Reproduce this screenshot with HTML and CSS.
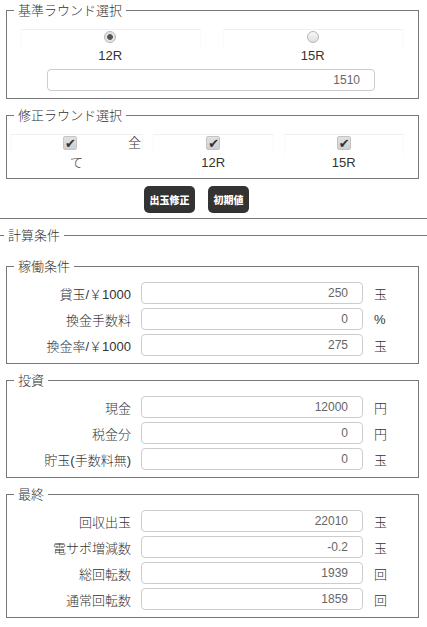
FILE: index.html
```html
<!DOCTYPE html>
<html lang="ja">
<head>
  <meta charset="UTF-8" />
  <meta name="viewport" content="width=device-width,initial-scale=1" />
  <title>出玉計算</title>
  <link rel="stylesheet" href="styles.css">
</head>
<body>
  <div class="top">
    <fieldset class="box">
      <legend>基準ラウンド選択</legend>
      <div class="opts two">
        <label class="opt">
          <span class="opt-box"><input type="radio" name="base" checked></span>
          <span class="opt-text">12R</span>
        </label>
        <label class="opt">
          <span class="opt-box"><input type="radio" name="base"></span>
          <span class="opt-text">15R</span>
        </label>
      </div>
      <input class="field base-field" type="text" value="1510">
    </fieldset>

    <fieldset class="box">
      <legend>修正ラウンド選択</legend>
      <div class="opts three">
        <label class="opt all">
          <span class="opt-box"><input type="checkbox" checked><span>全</span></span>
          <span class="opt-text">て</span>
        </label>
        <label class="opt">
          <span class="opt-box"><input type="checkbox" checked></span>
          <span class="opt-text">12R</span>
        </label>
        <label class="opt">
          <span class="opt-box"><input type="checkbox" checked></span>
          <span class="opt-text">15R</span>
        </label>
      </div>
    </fieldset>

    <div class="actions">
      <button class="btn">出玉修正</button>
      <button class="btn">初期値</button>
    </div>
  </div>

  <hr class="sep">

  <fieldset class="calc">
    <legend>計算条件</legend>
    <div class="calc-body">
      <fieldset class="box">
        <legend>稼働条件</legend>
        <div class="rows">
          <div class="row"><span class="lbl">貸玉/￥1000</span><input class="field" type="text" value="250"><span class="unit">玉</span></div>
          <div class="row"><span class="lbl">換金手数料</span><input class="field" type="text" value="0"><span class="unit">%</span></div>
          <div class="row"><span class="lbl">換金率/￥1000</span><input class="field" type="text" value="275"><span class="unit">玉</span></div>
        </div>
      </fieldset>

      <fieldset class="box">
        <legend>投資</legend>
        <div class="rows">
          <div class="row"><span class="lbl">現金</span><input class="field" type="text" value="12000"><span class="unit">円</span></div>
          <div class="row"><span class="lbl">税金分</span><input class="field" type="text" value="0"><span class="unit">円</span></div>
          <div class="row"><span class="lbl">貯玉(手数料無)</span><input class="field" type="text" value="0"><span class="unit">玉</span></div>
        </div>
      </fieldset>

      <fieldset class="box">
        <legend>最終</legend>
        <div class="rows">
          <div class="row"><span class="lbl">回収出玉</span><input class="field" type="text" value="22010"><span class="unit">玉</span></div>
          <div class="row"><span class="lbl">電サポ増減数</span><input class="field" type="text" value="-0.2"><span class="unit">玉</span></div>
          <div class="row"><span class="lbl">総回転数</span><input class="field" type="text" value="1939"><span class="unit">回</span></div>
          <div class="row"><span class="lbl">通常回転数</span><input class="field" type="text" value="1859"><span class="unit">回</span></div>
        </div>
      </fieldset>
    </div>
  </fieldset>
</body>
</html>
```

FILE: styles.css
```css
/* 共通 */
body { margin: 0; padding: 0; background: #fff; color: #333; font-family: "Liberation Sans", "Noto Sans CJK JP", sans-serif; font-size: 13px; font-weight: 300; }
.top { padding: 2px 8px 0 6px; }
fieldset { margin: 0; padding: 0; min-width: 0; }
legend { font-size: 13px; line-height: 17px; color: #333; }

/* 枠 */
.box { border: 1px solid #777; padding: 0 0 7px; }
.box + .box { margin-top: 8px; }
.box legend { margin-left: 7px; padding: 0 4px; }

/* ラジオ・チェック */
.opts { display: grid; padding-top: 10px; }
.opts.two   { grid-template-columns: 1fr 1fr; column-gap: 22px; padding-left: 13px; padding-right: 15px; }
.opts.three { grid-template-columns: 133px 1fr 1fr; column-gap: 10px; padding-left: 3px; padding-right: 14px; }
.opt { display: flex; flex-direction: column; align-items: center; }
.opt-box { align-self: stretch; display: flex; justify-content: center; border-top: 1px solid #f0f0f0; border-left: 1px solid #fafafa; border-right: 1px solid #fafafa; padding: 1px 0 5px; }
.opt-text { line-height: 16px; }
.opt.all .opt-box { justify-content: space-between; padding-left: 52px; }
.opt.all .opt-box span { line-height: 14px; margin-right: 1px; }

input[type=radio] { appearance: none; margin: 0; width: 12px; height: 12px; border: 1px solid #b5b5b5; border-radius: 50%; background: linear-gradient(#f8f8f8, #dedede); }
input[type=radio]:checked { background: radial-gradient(circle, #555 0 2.5px, #e4e4e4 3.2px); }
input[type=checkbox] { appearance: none; margin: 0; width: 14px; height: 14px; border: 1px solid #c4c4c4; border-radius: 2px; background: linear-gradient(#e2e2e2, #cfcfcf); position: relative; }
input[type=checkbox]:checked::after { content: "✔"; position: absolute; left: 1px; top: -1px; font: 700 13px/15px "DejaVu Sans", sans-serif; color: #333; }

/* 入力欄 */
.field { box-sizing: border-box; height: 22px; border: 1px solid #ccc; border-radius: 4px; padding: 0 14px 0 4px; text-align: right; font: 12px "Liberation Sans", sans-serif; color: #666; background: #fff; }
.base-field { display: block; width: 328px; margin: 5px 0 0 40px; }

/* ボタン */
.actions { display: flex; gap: 13px; padding-left: 138px; margin-top: 7px; }
.btn { height: 27px; padding: 0 5.5px; background: #333; color: #fff; border: none; border-radius: 5px; font: 900 10px "Noto Sans CJK JP", sans-serif; cursor: pointer; }

.sep { border: 0; border-top: 1px solid #777; margin: 5px 0 0; }

/* 計算条件 */
.calc { border: 0; border-top: 1px solid #777; margin-top: 8px; }
.calc > legend { margin-left: 4px; padding: 0 4px; }
.calc-body { padding: 14px 8px 0 6px; }

.rows { display: flex; flex-direction: column; gap: 4px; padding-top: 7px; }
.row { display: grid; grid-template-columns: 124px 222px auto; column-gap: 10px; align-items: center; }
.lbl { text-align: right; }
.unit { padding-left: 1px; }
```
